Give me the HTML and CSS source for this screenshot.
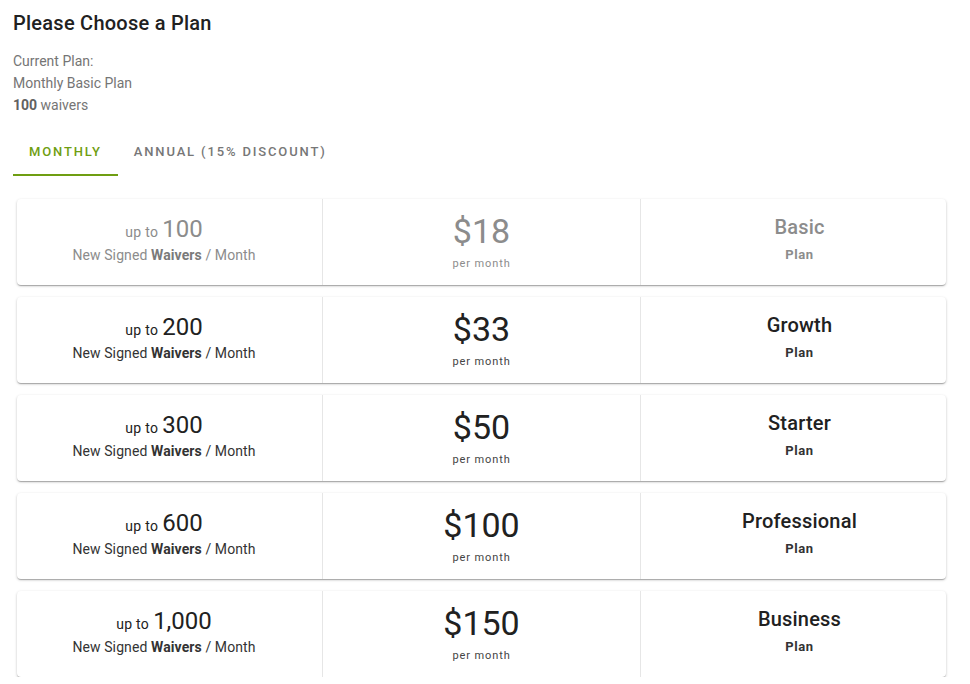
FILE: index.html
```html
<!DOCTYPE html>
<html>
<head>
<meta charset="utf-8">
<link rel="stylesheet" href="styles.css">
</head>
<body>
<div class="page">
  <h1 class="title">Please Choose a Plan</h1>
  <div class="current-info">
    <div>Current Plan:</div>
    <div>Monthly Basic Plan</div>
    <div><b>100</b> waivers</div>
  </div>
  <div class="tabs">
    <div class="tab active">MONTHLY</div>
    <div class="tab">ANNUAL (15% DISCOUNT)</div>
  </div>
  <div class="plans">
    <div class="plan current">
      <div class="cell qty"><div class="qty-line"><span class="upto">up to</span> <span class="num">100</span></div><div class="qty-sub">New Signed <b>Waivers</b> / Month</div></div>
      <div class="cell price"><div class="amount">$18</div><div class="per">per month</div></div>
      <div class="cell name"><div class="pname">Basic</div><div class="plabel">Plan</div></div>
    </div>
    <div class="plan">
      <div class="cell qty"><div class="qty-line"><span class="upto">up to</span> <span class="num">200</span></div><div class="qty-sub">New Signed <b>Waivers</b> / Month</div></div>
      <div class="cell price"><div class="amount">$33</div><div class="per">per month</div></div>
      <div class="cell name"><div class="pname">Growth</div><div class="plabel">Plan</div></div>
    </div>
    <div class="plan">
      <div class="cell qty"><div class="qty-line"><span class="upto">up to</span> <span class="num">300</span></div><div class="qty-sub">New Signed <b>Waivers</b> / Month</div></div>
      <div class="cell price"><div class="amount">$50</div><div class="per">per month</div></div>
      <div class="cell name"><div class="pname">Starter</div><div class="plabel">Plan</div></div>
    </div>
    <div class="plan">
      <div class="cell qty"><div class="qty-line"><span class="upto">up to</span> <span class="num">600</span></div><div class="qty-sub">New Signed <b>Waivers</b> / Month</div></div>
      <div class="cell price"><div class="amount">$100</div><div class="per">per month</div></div>
      <div class="cell name"><div class="pname">Professional</div><div class="plabel">Plan</div></div>
    </div>
    <div class="plan">
      <div class="cell qty"><div class="qty-line"><span class="upto">up to</span> <span class="num">1,000</span></div><div class="qty-sub">New Signed <b>Waivers</b> / Month</div></div>
      <div class="cell price"><div class="amount">$150</div><div class="per">per month</div></div>
      <div class="cell name"><div class="pname">Business</div><div class="plabel">Plan</div></div>
    </div>
  </div>
</div>
</body>
</html>
```
FILE: styles.css
```css
* { box-sizing: border-box; }
html, body { margin: 0; padding: 0; background: #fff; }
body { font-family: Roboto, "Liberation Sans", Arial, sans-serif; color: #212121; }
.page { padding: 11px 24px 0 13px; }
.title { margin: 0; font-size: 20px; line-height: 24px; font-weight: 500; color: #212121; letter-spacing: 0.25px; }
.current-info { margin-top: 15px; font-size: 14px; line-height: 22px; color: #757575; }
.current-info b { font-weight: 700; color: #616161; }
.tabs { display: flex; margin-top: 12px; height: 48px; }
.tab { padding: 0 16px; height: 48px; line-height: 47px; font-size: 13px; font-weight: 500; letter-spacing: 1.85px; color: #777; border-bottom: 2px solid transparent; }
.tab.active { color: #6f9e12; border-bottom-color: #6f9e12; }
.plans { margin: 23px 0 0 4px; display: flex; flex-direction: column; gap: 12px; }
.plan { display: grid; grid-template-columns: 305px 318px 1fr; height: 86px; background: #fff; border-radius: 4px; box-shadow: 0 1px 3px rgba(0,0,0,0.2), 0 1px 1px rgba(0,0,0,0.14), 0 2px 1px -1px rgba(0,0,0,0.12); }
.cell { display: flex; flex-direction: column; align-items: center; text-align: center; }
.cell + .cell { border-left: 1px solid #e6e6e6; }
.qty { padding-top: 16px; padding-right: 11px; }
.qty-line { line-height: 28px; height: 28px; }
.upto { font-size: 14px; color: #212121; letter-spacing: 0.3px; }
.num { font-size: 24px; color: #212121; }
.qty-sub { margin-top: 2px; font-size: 14px; line-height: 20px; color: #333; letter-spacing: 0.1px; }
.qty-sub b { font-weight: 700; }
.price { padding-top: 12px; }
.amount { font-size: 34px; line-height: 40px; font-weight: 400; color: #212121; }
.per { margin-top: 5px; font-size: 11px; line-height: 16px; color: #444; letter-spacing: 0.9px; }
.name { padding-top: 16px; padding-left: 12px; }
.pname { font-size: 20px; line-height: 24px; font-weight: 500; color: #212121; letter-spacing: 0.2px; }
.plabel { margin-top: 7px; font-size: 13px; line-height: 18px; font-weight: 700; color: #333; letter-spacing: 0.6px; }
.plan.current .upto,
.plan.current .num,
.plan.current .qty-sub,
.plan.current .amount,
.plan.current .per,
.plan.current .pname,
.plan.current .plabel { color: #8c8c8c; }
.plan.current .qty-sub b { color: #7a7a7a; }
```
